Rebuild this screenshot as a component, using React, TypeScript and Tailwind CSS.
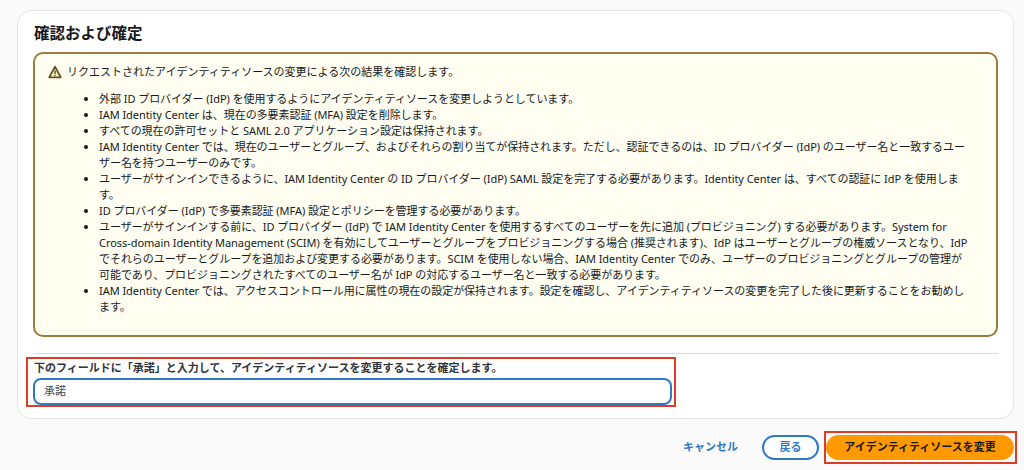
const font = { fontFamily: '"Noto Sans", "Noto Sans CJK JP", sans-serif' };

const items = [
  ["外部 ID プロバイダー (IdP) を使用するようにアイデンティティソースを変更しようとしています。"],
  ["IAM Identity Center は、現在の多要素認証 (MFA) 設定を削除します。"],
  ["すべての現在の許可セットと SAML 2.0 アプリケーション設定は保持されます。"],
  [
    "IAM Identity Center では、現在のユーザーとグループ、およびそれらの割り当てが保持されます。ただし、認証できるのは、ID プロバイダー (IdP) のユーザー名と一致するユー",
    "ザー名を持つユーザーのみです。",
  ],
  [
    "ユーザーがサインインできるように、IAM Identity Center の ID プロバイダー (IdP) SAML 設定を完了する必要があります。Identity Center は、すべての認証に IdP を使用しま",
    "す。",
  ],
  ["ID プロバイダー (IdP) で多要素認証 (MFA) 設定とポリシーを管理する必要があります。"],
  [
    "ユーザーがサインインする前に、ID プロバイダー (IdP) で IAM Identity Center を使用するすべてのユーザーを先に追加 (プロビジョニング) する必要があります。System for",
    "Cross-domain Identity Management (SCIM) を有効にしてユーザーとグループをプロビジョニングする場合 (推奨されます)、IdP はユーザーとグループの権威ソースとなり、IdP",
    "でそれらのユーザーとグループを追加および変更する必要があります。SCIM を使用しない場合、IAM Identity Center でのみ、ユーザーのプロビジョニングとグループの管理が",
    "可能であり、プロビジョニングされたすべてのユーザー名が IdP の対応するユーザー名と一致する必要があります。",
  ],
  [
    "IAM Identity Center では、アクセスコントロール用に属性の現在の設定が保持されます。設定を確認し、アイデンティティソースの変更を完了した後に更新することをお勧めし",
    "ます。",
  ],
];

function WarningIcon() {
  return (
    <svg width="14" height="14" viewBox="0 0 16 16" fill="none" className="shrink-0">
      <path d="M8 2 1.4 14h13.2L8 2Z" fill="#fdf3c4" stroke="#5f5120" strokeWidth="2" strokeLinejoin="round" />
      <path d="M8 6.2v4.2M8 11.2v1.5" stroke="#5f5120" strokeWidth="1.7" />
    </svg>
  );
}

export default function App() {
  return (
    <main className="h-[470px] overflow-hidden bg-[#fafafa] pt-[10px] pr-[10px] pl-[17px] text-[#16191f]" style={font}>
      <section className="h-[409px] rounded-[14px] border border-[#e3e5e8] bg-white px-[15px]">
        <h2 className="mt-[12px] pl-[1px] text-[15.5px] leading-[20px] font-bold text-[#16191f]">確認および確定</h2>

        <div className="mt-[9px] h-[285px] rounded-[10px] border-2 border-[#9c7b3c] bg-[#fffef1] pt-[10px] pl-[13px] text-[11px] leading-[16px]">
          <div className="flex items-center gap-[5px]">
            <WarningIcon />
            <p>リクエストされたアイデンティティソースの変更による次の結果を確認します。</p>
          </div>
          <ul className="mt-[11px] list-disc pl-[51px] tracking-[-0.05px]">
            {items.map((lines) => (
              <li key={lines[0]}>
                {lines.map((line) => (
                  <span key={line} className="block whitespace-nowrap">
                    {line}
                  </span>
                ))}
              </li>
            ))}
          </ul>
        </div>

        <div className="mt-[16px] border-t border-[#d9dce0]">
          <div className="mt-[3px] -ml-[7px] h-[50px] w-[650px] border-2 border-[#dc3d26] pl-[5px]">
            <p className="mt-[1px] pl-[1px] text-[11px] leading-[16px] font-bold text-[#30343b]">
              下のフィールドに「承諾」と入力して、アイデンティティソースを変更することを確定します。
            </p>
            <div className="mt-[2px] flex h-[27px] w-[639px] items-center rounded-[8px] border-2 border-[#2f78c4] bg-white pl-[9px] text-[11px] text-[#414750]">
              承諾
            </div>
          </div>
        </div>
      </section>

      <footer className="mt-[12px] flex items-center justify-end">
        <button className="mr-[24px] text-[11px] font-bold text-[#2f78c4]">キャンセル</button>
        <button className="mr-[5px] h-[25px] w-[57px] rounded-full border-2 border-[#2f78c4] bg-white text-[11px] font-bold text-[#2f78c4]">
          戻る
        </button>
        <div className="-mr-[3px] border-2 border-[#dc3d26] py-[2px] pr-[1px]">
          <button className="block h-[25px] w-[188px] rounded-full bg-[#ff9900] text-[11px] font-bold text-[#16191f]">
            アイデンティティソースを変更
          </button>
        </div>
      </footer>
    </main>
  );
}
